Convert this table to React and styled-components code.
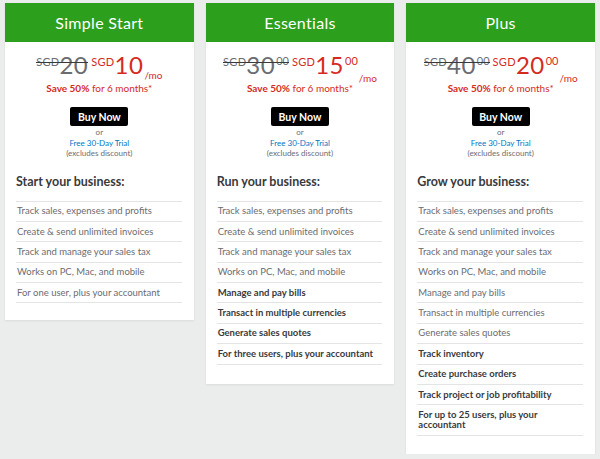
import React from "react";
import styled, { createGlobalStyle } from "styled-components";

const Global = createGlobalStyle`
  html, body { margin: 0; padding: 0; background: #ebedec; }
  body { font-family: "Lato", "Noto Sans", sans-serif; }
`;

const Page = styled.div`
  display: grid;
  grid-template-columns: repeat(3, 1fr);
  gap: 12px;
  padding: 3px 5px 0;
  align-items: start;
  width: 600px;
  box-sizing: border-box;
`;

const Card = styled.div`
  background: #fff;
  box-shadow: 0 1px 2px rgba(0, 0, 0, 0.08);
  padding-bottom: ${(p) => p.$pb || 17}px;
`;

const Header = styled.div`
  background: #2ca01c;
  color: #fff;
  height: 39px;
  display: flex;
  align-items: center;
  justify-content: center;
  font-size: 16px;
  font-weight: 400;
  letter-spacing: 0.3px;
`;

const PriceRow = styled.div`
  display: flex;
  justify-content: center;
  align-items: flex-start;
  margin-top: 11px;
  height: 28px;
`;

const Price = styled.div`
  display: flex;
  align-items: flex-start;
  color: ${(p) => (p.$old ? "#6b6c72" : "#d52b1e")};
  position: relative;
  margin-right: ${(p) => (p.$old ? 3 : 0)}px;
  ${(p) =>
    p.$old &&
    `
    &::after {
      content: "";
      position: absolute;
      left: 0;
      right: 0;
      top: 9px;
      height: 1px;
      background: #393a3d;
    }
  `}
`;

const Cur = styled.span`
  font-size: 11px;
  line-height: 1;
  margin-top: 3px;
  letter-spacing: 0.3px;
`;

const Big = styled.span`
  font-size: 24px;
  line-height: 1;
  letter-spacing: 0.5px;
`;

const Cents = styled.span`
  font-size: 11px;
  line-height: 1;
  margin-top: 2px;
  margin-left: 1px;
`;

const Per = styled.span`
  align-self: flex-end;
  font-size: 10px;
  line-height: 1;
  color: #d52b1e;
  margin-left: 1px;
  margin-bottom: ${(p) => (p.$low ? -2 : 1)}px;
`;

const Save = styled.div`
  text-align: center;
  color: #d52b1e;
  font-size: 10px;
  margin-top: 1px;
  b { font-weight: 700; }
`;

const BuyBtn = styled.button`
  display: block;
  margin: 13px auto 0;
  background: #000;
  color: #fff;
  border: 0;
  border-radius: 2px;
  width: 58px;
  height: 19px;
  padding: 0;
  font-family: inherit;
  font-size: 10.5px;
  font-weight: 700;
`;

const Small = styled.div`
  text-align: center;
  font-size: 8px;
  line-height: 10.5px;
  color: ${(p) => (p.$link ? "#0077c5" : "#6b6c72")};
`;

const SmallGroup = styled.div`
  margin-top: 1px;
`;

const Heading = styled.div`
  margin: 15px 11px 0;
  font-size: 12.5px;
  line-height: 15px;
  font-weight: 700;
  color: #393a3d;
  height: 27px;
`;

const List = styled.ul`
  list-style: none;
  margin: 0 12px 0 11px;
  padding: 0;
  border-top: 1px solid #e3e4e6;
`;

const Item = styled.li`
  border-bottom: 1px solid #e3e4e6;
  padding: 4.7px 2px 4.7px 1px;
  line-height: 10px;
  font-size: 9.5px;
  color: ${(p) => (p.$bold ? "#393a3d" : "#6b6c72")};
  font-weight: ${(p) => (p.$bold ? 700 : 400)};
`;

const plans = [
  {
    name: "Simple Start",
    old: "20",
    oldCents: null,
    now: "10",
    cents: null,
    heading: "Start your business:",
    pb: 17,
    items: [
      ["Track sales, expenses and profits"],
      ["Create & send unlimited invoices"],
      ["Track and manage your sales tax"],
      ["Works on PC, Mac, and mobile"],
      ["For one user, plus your accountant"],
    ],
  },
  {
    name: "Essentials",
    old: "30",
    oldCents: "00",
    now: "15",
    cents: "00",
    heading: "Run your business:",
    pb: 19,
    items: [
      ["Track sales, expenses and profits"],
      ["Create & send unlimited invoices"],
      ["Track and manage your sales tax"],
      ["Works on PC, Mac, and mobile"],
      ["Manage and pay bills", true],
      ["Transact in multiple currencies", true],
      ["Generate sales quotes", true],
      ["For three users, plus your accountant", true],
    ],
  },
  {
    name: "Plus",
    old: "40",
    oldCents: "00",
    now: "20",
    cents: "00",
    heading: "Grow your business:",
    pb: 18,
    items: [
      ["Track sales, expenses and profits"],
      ["Create & send unlimited invoices"],
      ["Track and manage your sales tax"],
      ["Works on PC, Mac, and mobile"],
      ["Manage and pay bills"],
      ["Transact in multiple currencies"],
      ["Generate sales quotes"],
      ["Track inventory", true],
      ["Create purchase orders", true],
      ["Track project or job profitability", true],
      ["For up to 25 users, plus your accountant", true],
    ],
  },
];

export default function App() {
  return (
    <>
      <Global />
      <Page>
        {plans.map((p) => (
          <Card key={p.name} $pb={p.pb}>
            <Header>{p.name}</Header>
            <PriceRow>
              <Price $old>
                <Cur>SGD</Cur>
                <Big>{p.old}</Big>
                {p.oldCents && <Cents>{p.oldCents}</Cents>}
              </Price>
              <Price>
                <Cur>SGD</Cur>
                <Big>{p.now}</Big>
                {p.cents && <Cents>{p.cents}</Cents>}
              </Price>
              <Per $low={!!p.cents}>/mo</Per>
            </PriceRow>
            <Save>
              <b>Save 50%</b> for 6 months*
            </Save>
            <BuyBtn>Buy Now</BuyBtn>
            <SmallGroup>
              <Small>or</Small>
              <Small $link>Free 30-Day Trial</Small>
              <Small>(excludes discount)</Small>
            </SmallGroup>
            <Heading>{p.heading}</Heading>
            <List>
              {p.items.map(([t, b]) => (
                <Item key={t} $bold={b}>
                  {t}
                </Item>
              ))}
            </List>
          </Card>
        ))}
      </Page>
    </>
  );
}
